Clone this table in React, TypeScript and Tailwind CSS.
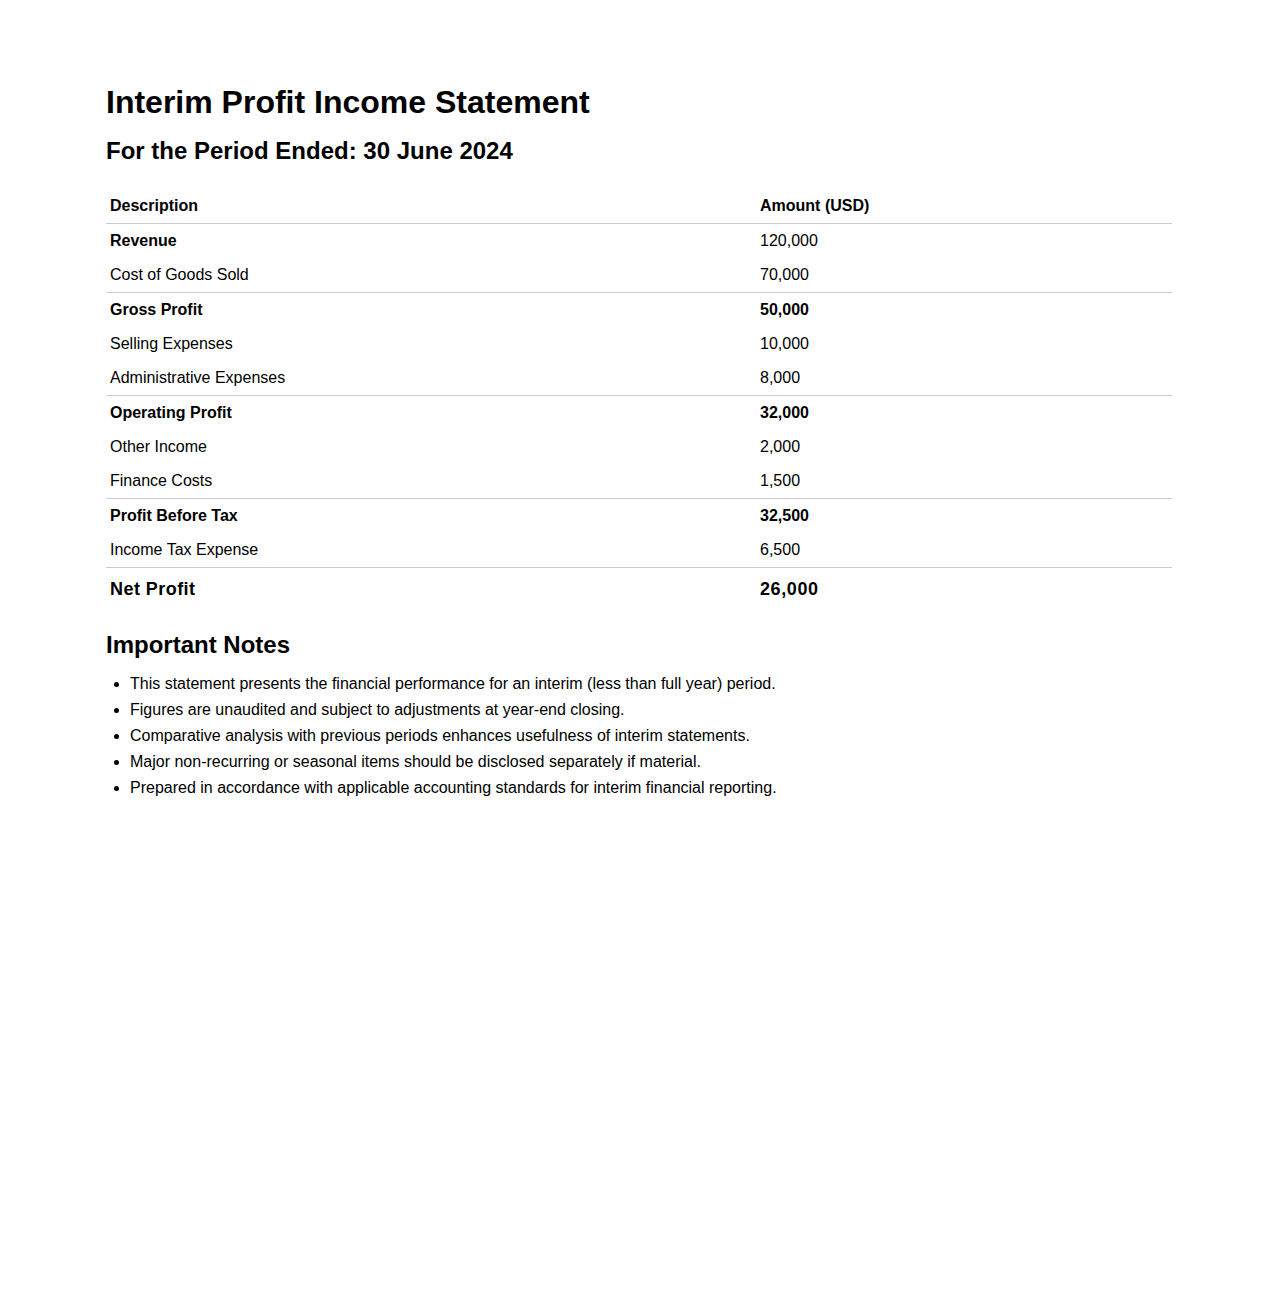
const rows = [
  { label: "Revenue", amount: "120,000", labelBold: true, amountBold: false, border: false },
  { label: "Cost of Goods Sold", amount: "70,000", labelBold: false, amountBold: false, border: false },
  { label: "Gross Profit", amount: "50,000", labelBold: true, amountBold: true, border: true },
  { label: "Selling Expenses", amount: "10,000", labelBold: false, amountBold: false, border: false },
  { label: "Administrative Expenses", amount: "8,000", labelBold: false, amountBold: false, border: false },
  { label: "Operating Profit", amount: "32,000", labelBold: true, amountBold: true, border: true },
  { label: "Other Income", amount: "2,000", labelBold: false, amountBold: false, border: false },
  { label: "Finance Costs", amount: "1,500", labelBold: false, amountBold: false, border: false },
  { label: "Profit Before Tax", amount: "32,500", labelBold: true, amountBold: true, border: true },
  { label: "Income Tax Expense", amount: "6,500", labelBold: false, amountBold: false, border: false },
];

const notes = [
  "This statement presents the financial performance for an interim (less than full year) period.",
  "Figures are unaudited and subject to adjustments at year-end closing.",
  "Comparative analysis with previous periods enhances usefulness of interim statements.",
  "Major non-recurring or seasonal items should be disclosed separately if material.",
  "Prepared in accordance with applicable accounting standards for interim financial reporting.",
];

export default function App() {
  return (
    <div className="min-h-[1300px] bg-white font-['Liberation_Sans',Arial,sans-serif] text-black">
      <div className="mx-auto w-[1066px] pt-[84px]">
        <h1 className="text-[32px] font-bold leading-[37px]">Interim Profit Income Statement</h1>
        <h2 className="mt-[16px] text-[24px] font-bold leading-[28px]">
          For the Period Ended: 30 June 2024
        </h2>

        <table className="mt-[24px] w-full border-collapse text-[16px]">
          <thead>
            <tr className="border-b border-[#cccccc]">
              <th className="w-[650px] px-1 py-2 text-left font-bold leading-[18px]">Description</th>
              <th className="px-1 py-2 text-left font-bold leading-[18px]">Amount (USD)</th>
            </tr>
          </thead>
          <tbody>
            {rows.map((r) => (
              <tr key={r.label} className={r.border ? "border-t border-[#cccccc]" : ""}>
                <td className={`px-1 py-2 leading-[18px] ${r.labelBold ? "font-bold" : ""}`}>{r.label}</td>
                <td className={`px-1 py-2 leading-[18px] ${r.amountBold ? "font-bold" : ""}`}>{r.amount}</td>
              </tr>
            ))}
            <tr className="border-t border-[#cccccc]">
              <td className="px-1 pt-[11px] pb-[9px] text-[18px] font-bold leading-[20px] tracking-[0.45px]">Net Profit</td>
              <td className="px-1 pt-[11px] pb-[9px] text-[18px] font-bold leading-[20px] tracking-[0.6px]">26,000</td>
            </tr>
          </tbody>
        </table>

        <h3 className="mt-[23px] text-[24px] font-bold leading-[28px]">Important Notes</h3>
        <ul className="mt-[12px] list-disc pl-6 text-[16px] leading-[26px]">
          {notes.map((n) => (
            <li key={n}>{n}</li>
          ))}
        </ul>
      </div>
    </div>
  );
}
